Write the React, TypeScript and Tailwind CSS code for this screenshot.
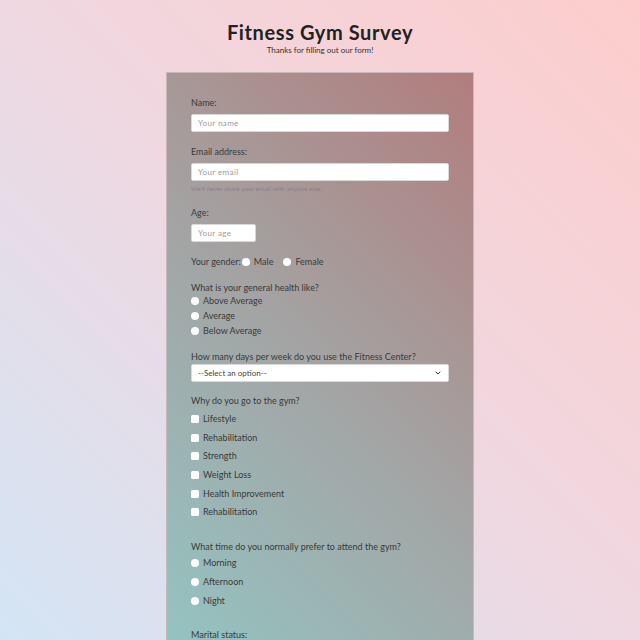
import React from 'react';

const font = { fontFamily: 'Lato, "Liberation Sans", sans-serif' };

function Radio({ label, h = 'h-[15px]' }: { label: string; h?: string }) {
    return (
        <label className={`flex items-center gap-[4px] ${h}`}>
            <span className="w-[8px] h-[8px] rounded-full bg-white shrink-0" />
            <span>{label}</span>
        </label>
    );
}

function Check({ label }: { label: string }) {
    return (
        <label className="flex items-center gap-[4px] h-[18.6px]">
            <span className="w-[8px] h-[8px] rounded-[1.5px] bg-white shrink-0" />
            <span>{label}</span>
        </label>
    );
}

function TextInput({ placeholder, className }: { placeholder: string; className?: string }) {
    return (
        <div
            className={`h-[18px] bg-white rounded-[2px] border border-[#d9d9d9] flex items-center px-[6px] text-[8px] text-[#9a9a9a] tracking-[0.4px] ${className ?? ''}`}
        >
            {placeholder}
        </div>
    );
}

export default function App() {
    return (
        <div
            className="min-h-[640px] w-full bg-fixed bg-[linear-gradient(to_top_right,#d3e5f5,#efd8e1_50%,#fdcdcc)] text-[#3a3a3a]"
            style={font}
        >
            <div className="pt-[19px] flex flex-col items-center">
                <h1 className="text-[20px] leading-[26px] font-bold text-[#222] tracking-[0.6px]">Fitness Gym Survey</h1>
                <p className="text-[8px] leading-[10px] text-[#333]">Thanks for filling out our form!</p>

                <form className="mt-[17px] w-[308px] border border-[#c8b8bb] bg-fixed bg-[linear-gradient(to_top_right,#94c3c1_13%,#a4a3a3_47%,#b27c7c_82%)] px-[24px] pt-[24px] pb-[40px] text-[9px] leading-[12px]">
                    <div className="mb-[5px]">Name:</div>
                    <TextInput placeholder="Your name" />

                    <div className="mt-[14px] mb-[5px]">Email address:</div>
                    <TextInput placeholder="Your email" />
                    <div className="mt-[3px] text-[6.5px] leading-[9px] text-[#8c7f8c]">We'll never share your email with anyone else.</div>

                    <div className="mt-[14px] mb-[5px]">Age:</div>
                    <TextInput placeholder="Your age" className="w-[65px]" />

                    <div className="mt-[12px] flex items-center h-[15px]">
                        <span>Your gender:</span>
                        <span className="w-[8px] h-[8px] rounded-full bg-white ml-[1px]" />
                        <span className="ml-[4px]">Male</span>
                        <span className="w-[8px] h-[8px] rounded-full bg-white ml-[10px]" />
                        <span className="ml-[4px]">Female</span>
                    </div>

                    <div className="mt-[12.5px]">What is your general health like?</div>
                    <div className="flex flex-col">
                        <Radio label="Above Average" />
                        <Radio label="Average" />
                        <Radio label="Below Average" />
                    </div>

                    <div className="mt-[12.5px]">How many days per week do you use the Fitness Center?</div>
                    <div className="mt-[1px] h-[18px] bg-white rounded-[2px] border border-[#d9d9d9] flex items-center justify-between px-[6px] text-[8px] text-[#444]">
                        <span>--Select an option--</span>
                        <svg width="8" height="8" viewBox="0 0 24 24" fill="none" stroke="#333" strokeWidth="3" strokeLinecap="round" strokeLinejoin="round">
                            <path d="M6 9l6 6 6-6" />
                        </svg>
                    </div>

                    <div className="mt-[13px] mb-[3px]">Why do you go to the gym?</div>
                    <div className="flex flex-col">
                        <Check label="Lifestyle" />
                        <Check label="Rehabilitation" />
                        <Check label="Strength" />
                        <Check label="Weight Loss" />
                        <Check label="Health Improvement" />
                        <Check label="Rehabilitation" />
                    </div>

                    <div className="mt-[19px] mb-[1px]">What time do you normally prefer to attend the gym?</div>
                    <div className="flex flex-col">
                        <Radio label="Morning" h="h-[19px]" />
                        <Radio label="Afternoon" h="h-[19px]" />
                        <Radio label="Night" h="h-[19px]" />
                    </div>

                    <div className="mt-[18px] mb-[1px]">Marital status:</div>
                    <div className="flex flex-col">
                        <Radio label="Single" h="h-[19px]" />
                        <Radio label="Married" h="h-[19px]" />
                        <Radio label="Divorced" h="h-[19px]" />
                        <Radio label="Widowed" h="h-[19px]" />
                    </div>

                    <div className="mt-[19px] mb-[6px]">Any comments or suggestions?</div>
                    <div className="h-[60px] bg-white rounded-[2px] border border-[#d9d9d9] px-[6px] py-[4px] text-[8px] text-[#9a9a9a]">
                        Enter your comment here...
                    </div>

                    <button type="button" className="mt-[16px] w-full h-[24px] bg-[#3a3a3a] text-white text-[9px] rounded-[2px]">
                        Submit
                    </button>
                </form>
            </div>
        </div>
    );
}
